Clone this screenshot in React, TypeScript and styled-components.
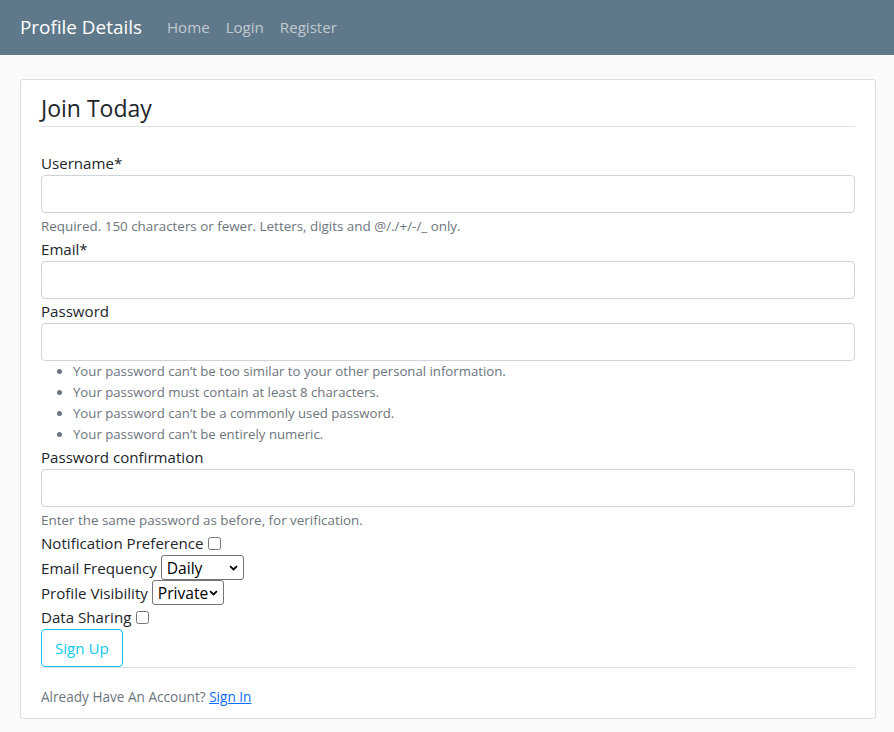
import React from 'react';
import styled, { createGlobalStyle } from 'styled-components';

const GlobalStyle = createGlobalStyle`
  body {
    margin: 0;
    background: #fafafa;
    color: #212529;
    font-family: 'Open Sans', 'Noto Sans', sans-serif;
    font-size: 15.1px;
    line-height: 1.5;
  }
  * {
    box-sizing: border-box;
  }
`;

const Navbar = styled.header`
  height: 55px;
  background: #5f788a;
  display: flex;
  align-items: center;
  padding: 0 20px;
`;

const Brand = styled.a`
  color: #fff;
  font-size: 18.9px;
  text-decoration: none;
  margin-right: 17px;
`;

const NavLink = styled.a`
  color: rgba(255, 255, 255, 0.62);
  font-size: 15.1px;
  text-decoration: none;
  padding: 0 8px;
`;

const Main = styled.main`
  padding: 24px 18px 0 20px;
`;

const Card = styled.section`
  background: #fff;
  border: 1px solid #ddd;
  border-radius: 3px;
  padding: 10px 20px;
`;

const Legend = styled.h2`
  margin: 0 0 24px;
  font-size: 23px;
  font-weight: 400;
  line-height: 36px;
  border-bottom: 1px solid #dee2e6;
`;

const Label = styled.label`
  display: block;
  line-height: 24px;
`;

const Input = styled.input`
  display: block;
  width: 100%;
  height: 38px;
  padding: 6px 12px;
  font: inherit;
  color: #212529;
  background: #fff;
  border: 1px solid #ced4da;
  border-radius: 4px;
  outline: none;
`;

const Help = styled.div`
  margin-top: 3px;
  font-size: 13.4px;
  line-height: 21px;
  color: #6c757d;
`;

const HintList = styled.ul`
  margin: 0;
  padding-left: 32px;
  font-size: 13.2px;
  line-height: 21px;
  color: #6c757d;
`;

const InlineRow = styled.div<{ tall?: boolean }>`
  display: flex;
  align-items: center;
  height: ${({ tall }) => (tall ? '25px' : '24px')};
  line-height: 24px;
  gap: 4px;
`;

const Checkbox = styled.input`
  width: 13px;
  height: 13px;
  margin: 0 0 0 1px;
`;

const chevron =
  "url(\"data:image/svg+xml;utf8,<svg xmlns='http://www.w3.org/2000/svg' width='10' height='7' viewBox='0 0 10 7'><path d='M1 1.2l4 4 4-4' fill='none' stroke='black' stroke-width='2'/></svg>\")";

const Select = styled.select<{ w: number }>`
  appearance: none;
  width: ${({ w }) => w}px;
  height: 25px;
  font-family: inherit;
  font-size: 15.6px;
  color: #000;
  background: #fff ${chevron} no-repeat right 5px center;
  background-size: 9px 6px;
  border: 1px solid #767676;
  border-radius: 3px;
  padding: 0 0 0 5px;
`;

const SubmitButton = styled.button`
  display: block;
  height: 38px;
  padding: 6px 13px;
  font: inherit;
  color: #0dcaf0;
  background: transparent;
  border: 1px solid #0dcaf0;
  border-radius: 4px;
  cursor: pointer;
`;

const Footer = styled.div`
  border-top: 1px solid #dee2e6;
  padding-top: 17px;
  line-height: 23px;
`;

const Muted = styled.small`
  font-size: 13.6px;
  color: #6c757d;
`;

const Link = styled.a`
  color: #0d6efd;
  text-decoration: underline;
`;

const passwordHints = [
  'Your password can’t be too similar to your other personal information.',
  'Your password must contain at least 8 characters.',
  'Your password can’t be a commonly used password.',
  'Your password can’t be entirely numeric.',
];

export default function App() {
  return (
    <>
      <GlobalStyle />
      <Navbar>
        <Brand href="#">Profile Details</Brand>
        <NavLink href="#">Home</NavLink>
        <NavLink href="#">Login</NavLink>
        <NavLink href="#">Register</NavLink>
      </Navbar>
      <Main>
        <Card>
          <form onSubmit={(e) => e.preventDefault()}>
            <Legend>Join Today</Legend>

            <Label htmlFor="username">Username*</Label>
            <Input id="username" type="text" />
            <Help>Required. 150 characters or fewer. Letters, digits and @/./+/-/_ only.</Help>

            <Label htmlFor="email">Email*</Label>
            <Input id="email" type="email" />

            <Label htmlFor="password1">Password</Label>
            <Input id="password1" type="password" />
            <HintList>
              {passwordHints.map((hint) => (
                <li key={hint}>{hint}</li>
              ))}
            </HintList>

            <Label htmlFor="password2">Password confirmation</Label>
            <Input id="password2" type="password" />
            <Help>Enter the same password as before, for verification.</Help>

            <InlineRow>
              <span>Notification Preference</span>
              <Checkbox type="checkbox" />
            </InlineRow>
            <InlineRow tall>
              <span>Email Frequency</span>
              <Select w={83} defaultValue="daily">
                <option value="daily">Daily</option>
                <option value="weekly">Weekly</option>
                <option value="monthly">Monthly</option>
              </Select>
            </InlineRow>
            <InlineRow tall>
              <span>Profile Visibility</span>
              <Select w={72} defaultValue="private">
                <option value="private">Private</option>
                <option value="public">Public</option>
              </Select>
            </InlineRow>
            <InlineRow>
              <span>Data Sharing</span>
              <Checkbox type="checkbox" />
            </InlineRow>

            <SubmitButton type="submit">Sign Up</SubmitButton>
          </form>
          <Footer>
            <Muted>
              Already Have An Account? <Link href="#">Sign In</Link>
            </Muted>
          </Footer>
        </Card>
      </Main>
    </>
  );
}
